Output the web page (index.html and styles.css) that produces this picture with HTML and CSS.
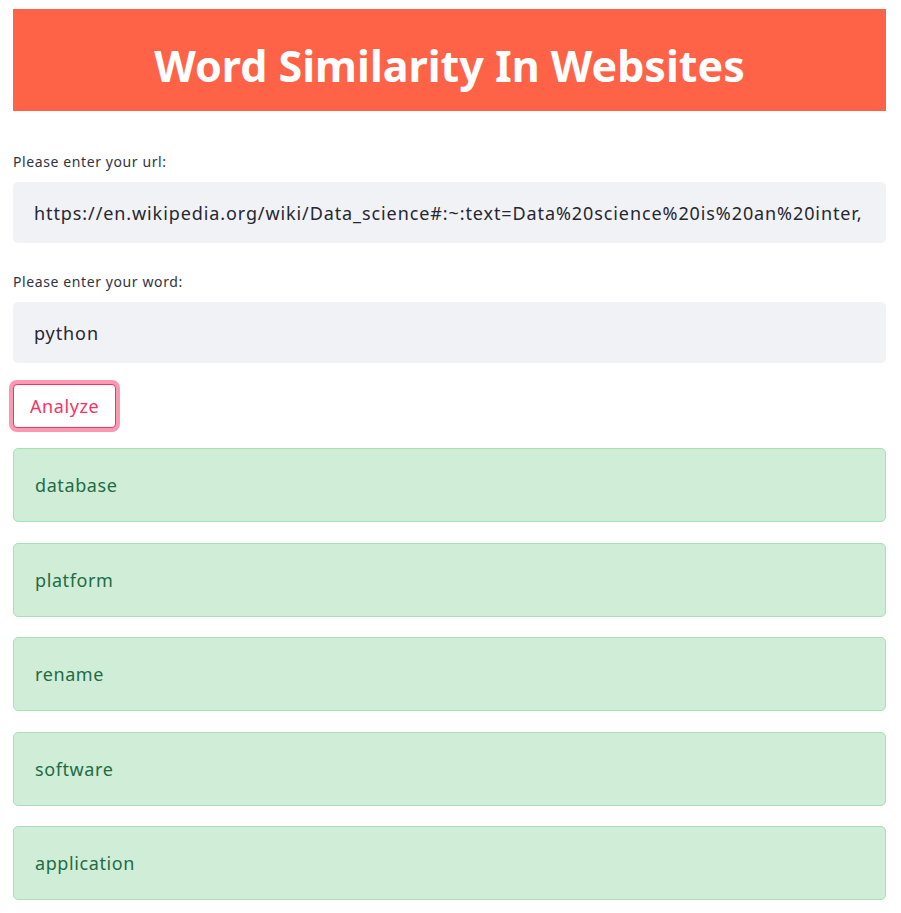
FILE: index.html
```html
<!DOCTYPE html>
<html>
<head>
<meta charset="utf-8">
<link rel="stylesheet" href="styles.css">
</head>
<body>
<main class="app">
  <header class="banner"><h1 class="title">Word Similarity In Websites</h1></header>
  <section class="field field-url">
    <label class="label" for="url">Please enter your url:</label>
    <div class="input"><span class="input-text">https://en.wikipedia.org/wiki/Data_science#:~:text=Data%20science%20is%20an%20inter,</span></div>
  </section>
  <section class="field field-word">
    <label class="label" for="word">Please enter your word:</label>
    <div class="input"><span class="input-text">python</span></div>
  </section>
  <div class="actions"><button class="btn">Analyze</button></div>
  <div class="results">
    <div class="alert">database</div>
    <div class="alert">platform</div>
    <div class="alert">rename</div>
    <div class="alert">software</div>
    <div class="alert">application</div>
  </div>
</main>
</body>
</html>
```

FILE: styles.css
```css
* { box-sizing: border-box; }
html, body { margin: 0; padding: 0; background: #fff; }
body {
  font-family: "Noto Sans", "Open Sans", sans-serif;
  color: #262730;
}
.app {
  width: 873px;
  margin-left: 13px;
  padding-top: 9px;
  display: flex;
  flex-direction: column;
}
.banner {
  background: #ff6347;
  height: 102px;
  display: flex;
  align-items: center;
  justify-content: center;
}
.title {
  margin: 0;
  color: #fff;
  font-size: 43px;
  font-weight: 700;
  line-height: 1;
  padding-top: 10px;
}
.field { display: flex; flex-direction: column; }
.field-url { margin-top: 41px; }
.field-word { margin-top: 29px; }
.label {
  font-size: 14px;
  line-height: 20px;
  height: 20px;
  color: #31333f;
  letter-spacing: 0.6px;
  margin-bottom: 10px;
}
.input {
  height: 61px;
  background: #f0f2f6;
  border-radius: 5px;
  display: flex;
  align-items: center;
  padding-left: 21px;
  overflow: hidden;
  white-space: nowrap;
}
.input-text { font-size: 18px; color: #262730; letter-spacing: 0.9px; }
.actions { margin-top: 21px; display: flex; }
.btn {
  height: 44px;
  padding: 0 16px;
  background: #fff;
  border: 1px solid #f63366;
  border-radius: 4px;
  box-shadow: 0 0 0 4px rgba(246, 51, 102, 0.5);
  color: #f63366;
  font-family: inherit;
  font-size: 18px;
  letter-spacing: 0.6px;
}
.results {
  margin-top: 20px;
  display: flex;
  flex-direction: column;
  gap: 20.5px;
}
.alert {
  height: 74px;
  background: #d0edd8;
  border: 1px solid #a6e2b6;
  border-radius: 5px;
  display: flex;
  align-items: center;
  padding-left: 21px;
  color: #1e6c45;
  font-size: 18px;
  letter-spacing: 0.6px;
}
```
